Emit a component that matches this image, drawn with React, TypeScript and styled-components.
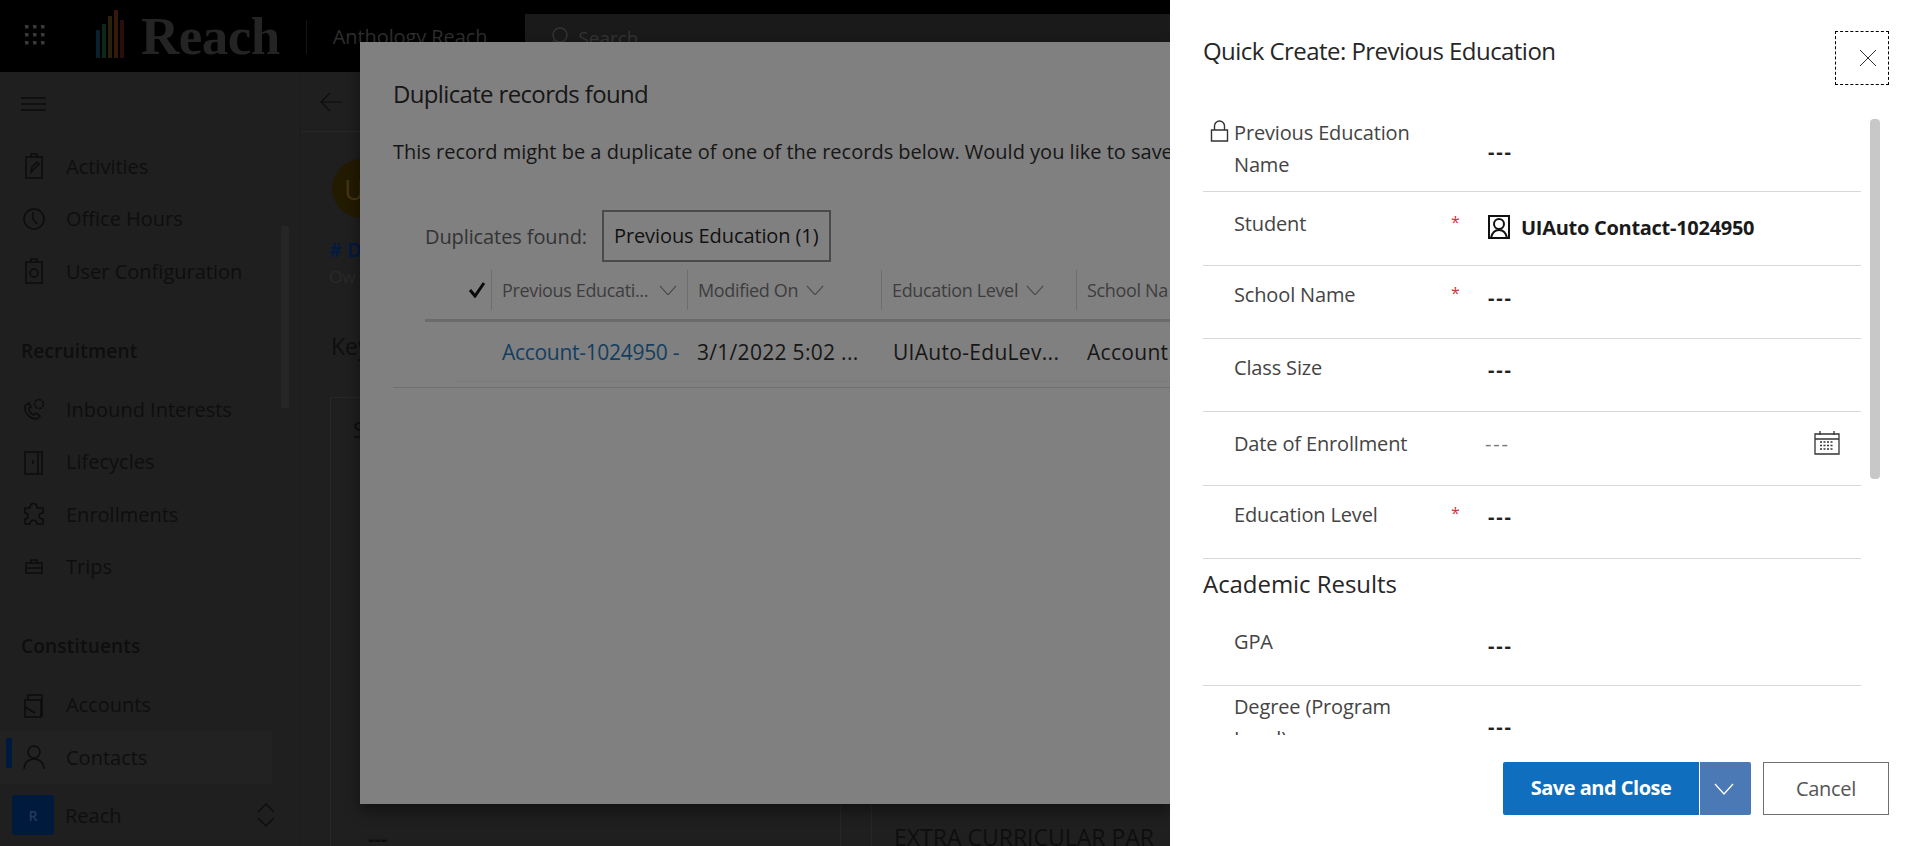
import React from 'react'
import styled, { createGlobalStyle } from 'styled-components'

const GlobalStyle = createGlobalStyle`
  html, body, #root {
    margin: 0;
    height: 100%;
  }
  body {
    font-family: 'Open Sans', 'Noto Sans', 'Liberation Sans', sans-serif;
    background: #1f1f1f;
    overflow: hidden;
  }
  * {
    box-sizing: border-box;
  }
`

const Page = styled.div`
  position: relative;
  width: 1920px;
  height: 846px;
  overflow: hidden;
  display: flex;
  flex-direction: column;
  color: #0e0e0e;
`

/* ---- top header ---- */
const Header = styled.header`
  display: flex;
  height: 72px;
  flex: none;
  background: #000;
  padding-left: 23px;
`
const Waffle = styled.svg`
  width: 24px;
  height: 24px;
  margin-top: 23px;
`
const LogoMark = styled.svg`
  width: 30px;
  height: 48px;
  margin: 10px 0 0 49px;
`
const LogoText = styled.div`
  margin: 0 0 0 15px;
  font-family: 'Liberation Serif', serif;
  font-size: 53px;
  line-height: 72px;
  font-weight: 700;
  letter-spacing: -0.5px;
  color: #242424;
`
const HeaderDivider = styled.div`
  width: 1px;
  height: 34px;
  margin: 20px 26px 0 26px;
  background: #151515;
`
const AppName = styled.div`
  font-size: 20px;
  line-height: 74px;
  color: #2e2e2e;
  letter-spacing: -0.1px;
`
const SearchBox = styled.div`
  display: flex;
  align-items: center;
  gap: 10px;
  width: 700px;
  height: 58px;
  margin: 14px 0 0 38px;
  padding: 0 0 10px 23px;
  background: #1a1a1a;
  font-size: 19px;
  color: #333;
`

/* ---- sidebar ---- */
const Body = styled.div`
  display: flex;
  flex: 1;
  min-height: 0;
`
const Sidebar = styled.nav`
  position: relative;
  display: flex;
  flex-direction: column;
  width: 301px;
  flex: none;
  border-right: 1px solid #1b1b1b;
`
const Burger = styled.div`
  display: flex;
  align-items: center;
  height: 64px;
  margin-bottom: 4px;
  padding-left: 21px;
`
const NavGroup = styled.div`
  display: flex;
  flex-direction: column;
  flex: none;
`
const GroupTitle = styled.div`
  height: 52.5px;
  margin: 27px 0 6px;
  padding-left: 21px;
  font-size: 19px;
  font-weight: 600;
  line-height: 52px;
  color: #0e0e0e;
  letter-spacing: 0.2px;
`
const NavItem = styled.div<{ $active?: boolean }>`
  position: relative;
  display: flex;
  align-items: center;
  gap: 20px;
  width: 272px;
  height: 52.5px;
  padding-left: 22px;
  font-size: 20px;
  color: #0e0e0e;
  background: ${p => (p.$active ? '#222' : 'transparent')};
`
const ActiveMark = styled.span`
  position: absolute;
  left: 6px;
  top: 7px;
  width: 6px;
  height: 30px;
  border-radius: 1px;
  background: #00193f;
`
const NavIcon = styled.svg`
  width: 24px;
  height: 28px;
  flex: none;
`
const NavScroll = styled.div`
  position: absolute;
  left: 281px;
  top: 154px;
  width: 8px;
  height: 182px;
  background: #262626;
  border-radius: 2px;
`
const Footer = styled.div`
  display: flex;
  align-items: center;
  height: 62px;
  margin-top: auto;
  padding: 0 24px 0 12px;
  font-size: 20px;
`
const Tile = styled.div`
  display: grid;
  place-items: center;
  width: 42px;
  height: 40px;
  margin-right: 11px;
  border-radius: 3px;
  background: #001a3d;
  font-size: 14px;
  font-weight: 600;
  color: #233a5a;
`
const FooterLabel = styled.span`
  flex: 1;
`

/* ---- page underneath ---- */
const Main = styled.main`
  flex: 1;
  min-width: 0;
`
const CommandBar = styled.div`
  display: flex;
  align-items: center;
  height: 60px;
  padding-left: 19px;
  border-bottom: 1px solid #272727;
`
const RecordHead = styled.div`
  padding: 27px 0 0 31px;
`
const Avatar = styled.div`
  display: flex;
  align-items: center;
  width: 59px;
  height: 59px;
  padding-left: 12px;
  border-radius: 50%;
  background: #231a02;
  font-size: 28px;
  color: #43350e;
`
const RecordName = styled.div`
  margin: 18px 0 0 -3px;
  font-size: 20px;
  line-height: 28px;
  font-weight: 600;
  color: #001a46;
`
const RecordOwner = styled.div`
  margin-left: -3px;
  font-size: 17px;
  line-height: 26px;
  color: #2a2a2a;
`
const TabName = styled.div`
  margin: 39px 0 0 30px;
  font-size: 23px;
  line-height: 34px;
`
const CardGrid = styled.div`
  display: grid;
  grid-template-columns: 511px 1fr;
  gap: 30px;
  height: 450px;
  margin: 34px 0 0 29px;
`
const Card = styled.div`
  display: flex;
  flex-direction: column;
  justify-content: space-between;
  padding: 14px 22px 0;
  border: 1px solid #272727;
  border-bottom: 0;
`
const CardTitle = styled.div`
  font-size: 22px;
  line-height: 34px;
`
const CardValue = styled.div`
  height: 20px;
  padding-left: 15px;
  font-size: 20px;
  font-weight: 700;
  line-height: 24px;
`
const SideCard = styled(Card)`
  justify-content: flex-end;
  padding: 0 22px;
`
const SideCardTitle = styled.div`
  height: 26px;
  font-size: 23px;
  line-height: 33px;
  white-space: nowrap;
`

/* ---- duplicate dialog ---- */
const Dialog = styled.section`
  position: absolute;
  left: 360px;
  top: 42px;
  width: 811px;
  height: 762px;
  padding: 34px 0 0 33px;
  overflow: hidden;
  background: #808080;
  box-shadow: 0 6px 14px rgba(0, 0, 0, 0.45);
  color: #161616;
`
const DialogTitle = styled.h2`
  margin: 0;
  font-size: 24px;
  line-height: 36px;
  font-weight: 400;
  letter-spacing: -0.65px;
`
const DialogMessage = styled.p`
  margin: 25px 0 0;
  font-size: 20px;
  line-height: 30px;
  white-space: nowrap;
`
const TabRow = styled.div`
  display: flex;
  align-items: center;
  gap: 15px;
  margin: 43px 0 0 32px;
`
const TabCaption = styled.span`
  font-size: 20px;
  color: #333;
  letter-spacing: -0.1px;
`
const TabButton = styled.div`
  width: 229px;
  height: 52px;
  padding-left: 10px;
  border: 2px solid #4a4a4a;
  font-size: 20px;
  line-height: 48px;
  color: #111;
  white-space: nowrap;
  letter-spacing: -0.1px;
`
const GridHead = styled.div`
  display: flex;
  width: 778px;
  height: 60px;
  margin-left: 32px;
  padding: 8px 0 0 34px;
  border-bottom: 3px solid #6b6b6b;
`
const CheckCell = styled.div`
  display: flex;
  align-items: center;
  width: 32px;
  flex: none;
  height: 40px;
  padding-left: 9px;
`
const HeadCell = styled.div<{ $w: number; $gap?: number }>`
  display: flex;
  align-items: center;
  gap: ${p => p.$gap ?? 8}px;
  width: ${p => p.$w}px;
  flex: none;
  height: 40px;
  padding-left: 10px;
  border-left: 1px solid #6d6d6d;
  font-size: 18px;
  color: #3d3d3d;
  white-space: nowrap;
  letter-spacing: -0.35px;
`
const GridRow = styled.div`
  width: 777px;
  height: 66px;
  padding-left: 63px;
  border-bottom: 1px solid #6f6f6f;
`
const RowInner = styled.div`
  display: flex;
  height: 60px;
  padding-left: 46px;
  border-bottom: 1px solid #7a7a7a;
`
const RowCell = styled.div<{ $w: number; $link?: boolean }>`
  width: ${p => p.$w}px;
  flex: none;
  padding-top: 12px;
  font-size: 21px;
  line-height: 36px;
  white-space: nowrap;
  letter-spacing: ${p => (p.$link ? -0.3 : 0.3)}px;
  color: ${p => (p.$link ? '#133e60' : '#161616')};
`

/* ---- quick create panel ---- */
const Panel = styled.aside`
  position: absolute;
  left: 1170px;
  top: 0;
  display: flex;
  flex-direction: column;
  width: 750px;
  height: 846px;
  background: #fff;
  color: #333;
`
const PanelHead = styled.div`
  display: flex;
  justify-content: space-between;
  height: 113px;
  flex: none;
  padding: 31px 31px 0 33px;
`
const PanelTitle = styled.h1`
  margin: 0;
  font-size: 24px;
  line-height: 40px;
  font-weight: 400;
  color: #262626;
  letter-spacing: -0.55px;
`
const CloseButton = styled.div`
  display: grid;
  place-items: center;
  width: 54px;
  height: 54px;
  padding: 0 0 0 12px;
  border: 1px dashed #000;
`
const Form = styled.div`
  position: relative;
  flex: 1;
  min-height: 0;
  padding: 0 59px 0 33px;
  overflow: hidden;
`
const FormScroll = styled.div`
  position: absolute;
  right: 40px;
  top: 6px;
  width: 10px;
  height: 360px;
  border-radius: 4px;
  background: #c8c8c8;
`
const Row = styled.div<{ $h: number; $top: number; $line?: boolean }>`
  display: grid;
  grid-template-columns: 31px 221px 33px 1fr 47px;
  height: ${p => p.$h}px;
  padding-top: ${p => p.$top}px;
  border-bottom: ${p => (p.$line === false ? '0' : '1px solid #d8d8d8')};
`
const LockCell = styled.div`
  margin: 3px 0 0 7px;
`
const Label = styled.div`
  padding-right: 20px;
  font-size: 20px;
  line-height: 32px;
  color: #444;
  letter-spacing: -0.15px;
`
const Star = styled.div`
  margin-left: -4px;
  font-size: 16px;
  line-height: 28px;
  color: #d13438;
`
const Value = styled.div<{ $top?: number; $muted?: boolean }>`
  margin-top: ${p => p.$top ?? 0}px;
  margin-left: ${p => (p.$muted ? -3 : 0)}px;
  font-size: 20px;
  line-height: 32px;
  font-weight: ${p => (p.$muted ? 400 : 700)};
  letter-spacing: 1.8px;
  color: ${p => (p.$muted ? '#777' : '#222')};
`
const LookupValue = styled.div`
  display: flex;
  align-items: center;
  gap: 11px;
  margin-top: 3px;
  height: 32px;
  font-size: 20px;
  font-weight: 700;
  color: #1a1a1a;
  letter-spacing: -0.28px;
  white-space: nowrap;
`
const IconCell = styled.div`
  margin-top: 3px;
`
const SectionTitle = styled.h3`
  height: 50px;
  margin: 0;
  font-size: 24px;
  line-height: 50px;
  font-weight: 400;
  color: #262626;
  letter-spacing: -0.05px;
`
const Actions = styled.div`
  display: flex;
  justify-content: flex-end;
  height: 111px;
  flex: none;
  padding: 27px 31px 0 0;
`
const SaveButton = styled.div`
  width: 197px;
  height: 53px;
  border-radius: 2px 0 0 2px;
  background: #106ebe;
  border-right: 1px solid #fff;
  font-size: 20px;
  font-weight: 700;
  line-height: 52px;
  text-align: center;
  color: #fff;
  letter-spacing: -0.5px;
`
const SplitButton = styled.div`
  display: grid;
  place-items: center;
  width: 51px;
  height: 53px;
  margin-right: 12px;
  padding-right: 4px;
  border-radius: 0 2px 2px 0;
  background: #4a79b5;
`
const CancelButton = styled.div`
  width: 126px;
  height: 53px;
  border: 1px solid #707070;
  font-size: 20px;
  line-height: 51px;
  text-align: center;
  color: #555;
  letter-spacing: -0.3px;
`

const stroke = { fill: 'none', stroke: '#0c0c0c', strokeWidth: 1.5 }

const navIcons: Record<string, React.ReactNode> = {
  activities: (
    <g {...stroke}>
      <path d="M4 5h16v21H4zM9 5V2h6v3" />
      <path d="M9 20l1-5 5-5 2 2-5 5z" />
    </g>
  ),
  hours: (
    <g {...stroke}>
      <circle cx="12" cy="14" r="10" />
      <path d="M11 7v7l4 5" />
    </g>
  ),
  config: (
    <g {...stroke}>
      <path d="M4 5h16v21H4zM9 5V2h6v3" />
      <circle cx="12" cy="16" r="4" />
    </g>
  ),
  inbound: (
    <g {...stroke}>
      <path d="M3 11c-1 6 4 13 12 13l3-3-4-3-2 2c-3-1-5-4-5-7l2-1-2-4z" />
      <circle cx="17" cy="9" r="4.5" strokeDasharray="3 1" />
    </g>
  ),
  lifecycles: (
    <g {...stroke}>
      <path d="M3 4h17v22H3z" />
      <path d="M16 4v22M11 12v4" />
    </g>
  ),
  enrollments: (
    <g {...stroke}>
      <path d="M8 8c0-6 7-6 7 0h6v5c-5 0-5 6 0 6v5h-6c0-5-7-5-7 0H3v-5c4 0 4-6 0-6V8z" />
    </g>
  ),
  trips: (
    <g {...stroke}>
      <path d="M4 10h16v10H4zM9 10V7h6v3M4 15h16" />
    </g>
  ),
  accounts: (
    <g {...stroke}>
      <path d="M3 9h16v17H3zM6 9V4h14v22M3 16l10 6" />
    </g>
  ),
  contacts: (
    <g {...stroke}>
      <circle cx="12" cy="9" r="6" />
      <path d="M2 26c0-6 4-10 10-10s10 4 10 10" />
    </g>
  ),
}

const NavGlyph = ({ name }: { name: string }) => (
  <NavIcon viewBox="0 0 24 28">{navIcons[name]}</NavIcon>
)

const Chevron = ({ color = '#4a4a4a', size = 18 }: { color?: string; size?: number }) => (
  <svg width={size} height={size * 0.6} viewBox="0 0 20 12" fill="none" stroke={color} strokeWidth="1.3">
    <path d="M1 1l9 10 9-10" />
  </svg>
)

const FormRows = () => (
  <>
    <Row $h={79} $top={4}>
      <LockCell>
        <svg width="19" height="22" viewBox="0 0 19 22" fill="none" stroke="#333" strokeWidth="1.4">
          <path d="M1.5 10h16v11h-16zM4.5 10V6a5 5 0 0 1 10 0v4" />
        </svg>
      </LockCell>
      <Label>Previous Education Name</Label>
      <span />
      <Value $top={19}>---</Value>
    </Row>
    <Row $h={73.5} $top={16}>
      <span />
      <Label>Student</Label>
      <Star>*</Star>
      <LookupValue>
        <svg width="22" height="24" viewBox="0 0 22 24" fill="none" stroke="#111" strokeWidth="2">
          <path d="M1 1h20v22H1z" />
          <circle cx="11" cy="9" r="5" />
          <path d="M3 23c1-5 4-8 8-8s7 3 8 8" />
        </svg>
        UIAuto Contact-1024950
      </LookupValue>
    </Row>
    <Row $h={73.5} $top={13}>
      <span />
      <Label>School Name</Label>
      <Star>*</Star>
      <Value $top={3}>---</Value>
    </Row>
    <Row $h={73} $top={13}>
      <span />
      <Label>Class Size</Label>
      <span />
      <Value $top={2}>---</Value>
    </Row>
    <Row $h={74} $top={16}>
      <span />
      <Label>Date of Enrollment</Label>
      <span />
      <Value $muted>---</Value>
      <IconCell>
        <svg width="26" height="24" viewBox="0 0 26 24" fill="none" stroke="#333" strokeWidth="1.3">
          <path d="M1 3h24v20H1zM1 8h24M6 0v4M20 0v4" />
          <path d="M6 11h14M6 14.5h14M6 18h14" strokeDasharray="2 1.5" />
        </svg>
      </IconCell>
    </Row>
    <Row $h={73} $top={13}>
      <span />
      <Label>Education Level</Label>
      <Star>*</Star>
      <Value $top={2}>---</Value>
    </Row>
    <SectionTitle>Academic Results</SectionTitle>
    <Row $h={77} $top={17}>
      <span />
      <Label>GPA</Label>
      <span />
      <Value $top={4}>---</Value>
    </Row>
    <Row $h={80} $top={5} $line={false}>
      <span />
      <Label>Degree (Program Level)</Label>
      <span />
      <Value $top={20}>---</Value>
    </Row>
  </>
)

export default function App() {
  return (
    <Page>
      <GlobalStyle />
      <Header>
        <Waffle viewBox="0 0 24 24" fill="#3a3a3a">
          {[2, 10, 18].flatMap(y =>
            [2, 10, 18].map(x => <rect key={`${x}-${y}`} x={x} y={y} width="3.5" height="3.5" />),
          )}
        </Waffle>
        <LogoMark viewBox="0 0 30 48">
          <rect x="0" y="20" width="4" height="28" fill="#0a202c" />
          <rect x="6" y="14" width="4" height="34" fill="#0f2816" />
          <rect x="12" y="6" width="4" height="42" fill="#2a210a" />
          <rect x="18" y="0" width="4" height="48" fill="#341a0a" />
          <rect x="24" y="10" width="4" height="38" fill="#2a0e0c" />
        </LogoMark>
        <LogoText>Reach</LogoText>
        <HeaderDivider />
        <AppName>Anthology Reach</AppName>
        <SearchBox>
          <svg width="20" height="24" viewBox="0 0 20 24" fill="none" stroke="#333" strokeWidth="1.5">
            <circle cx="12" cy="9" r="7" />
            <path d="M7 14l-6 7" />
          </svg>
          Search
        </SearchBox>
      </Header>
      <Body>
        <Sidebar>
          <Burger>
            <svg width="25" height="14" viewBox="0 0 25 14" stroke="#0c0c0c" strokeWidth="1.4">
              <path d="M0 1h25M0 7h25M0 13h25" />
            </svg>
          </Burger>
          <NavGroup>
            <NavItem><NavGlyph name="activities" />Activities</NavItem>
            <NavItem><NavGlyph name="hours" />Office Hours</NavItem>
            <NavItem><NavGlyph name="config" />User Configuration</NavItem>
          </NavGroup>
          <NavGroup>
            <GroupTitle>Recruitment</GroupTitle>
            <NavItem><NavGlyph name="inbound" />Inbound Interests</NavItem>
            <NavItem><NavGlyph name="lifecycles" />Lifecycles</NavItem>
            <NavItem><NavGlyph name="enrollments" />Enrollments</NavItem>
            <NavItem><NavGlyph name="trips" />Trips</NavItem>
          </NavGroup>
          <NavGroup>
            <GroupTitle>Constituents</GroupTitle>
            <NavItem><NavGlyph name="accounts" />Accounts</NavItem>
            <NavItem $active><ActiveMark /><NavGlyph name="contacts" />Contacts</NavItem>
          </NavGroup>
          <NavScroll />
          <Footer>
            <Tile>R</Tile>
            <FooterLabel>Reach</FooterLabel>
            <svg width="20" height="26" viewBox="0 0 20 26" fill="none" stroke="#0c0c0c" strokeWidth="1.3">
              <path d="M2 10l8-8 8 8M2 16l8 8 8-8" />
            </svg>
          </Footer>
        </Sidebar>
        <Main>
          <CommandBar>
            <svg width="22" height="20" viewBox="0 0 22 20" fill="none" stroke="#0c0c0c" strokeWidth="1.1">
              <path d="M22 10H1M10 1l-9 9 9 9" />
            </svg>
          </CommandBar>
          <RecordHead>
            <Avatar>U</Avatar>
            <RecordName># D</RecordName>
            <RecordOwner>Ow</RecordOwner>
          </RecordHead>
          <TabName>Key</TabName>
          <CardGrid>
            <Card>
              <CardTitle>S</CardTitle>
              <CardValue>---</CardValue>
            </Card>
            <SideCard>
              <SideCardTitle>EXTRA CURRICULAR PAR</SideCardTitle>
            </SideCard>
          </CardGrid>
        </Main>
      </Body>

      <Dialog>
        <DialogTitle>Duplicate records found</DialogTitle>
        <DialogMessage>This record might be a duplicate of one of the records below. Would you like to save</DialogMessage>
        <TabRow>
          <TabCaption>Duplicates found:</TabCaption>
          <TabButton>Previous Education (1)</TabButton>
        </TabRow>
        <GridHead>
          <CheckCell>
            <svg width="18" height="16" viewBox="0 0 18 16" fill="none" stroke="#0a0a0a" strokeWidth="3">
              <path d="M2 8l5 6L16 1" />
            </svg>
          </CheckCell>
          <HeadCell $w={196} $gap={11}>Previous Educati...<Chevron /></HeadCell>
          <HeadCell $w={194}>Modified On<Chevron /></HeadCell>
          <HeadCell $w={195}>Education Level<Chevron /></HeadCell>
          <HeadCell $w={195}>School Na</HeadCell>
        </GridHead>
        <GridRow>
          <RowInner>
            <RowCell $w={195} $link>Account-1024950 -</RowCell>
            <RowCell $w={196}>3/1/2022 5:02 ...</RowCell>
            <RowCell $w={194}>UIAuto-EduLev...</RowCell>
            <RowCell $w={100}>Account</RowCell>
          </RowInner>
        </GridRow>
      </Dialog>

      <Panel>
        <PanelHead>
          <PanelTitle>Quick Create: Previous Education</PanelTitle>
          <CloseButton>
            <svg width="18" height="18" viewBox="0 0 18 18" stroke="#333" strokeWidth="1">
              <path d="M1 1l16 16M17 1L1 17" />
            </svg>
          </CloseButton>
        </PanelHead>
        <Form>
          <FormRows />
          <FormScroll />
        </Form>
        <Actions>
          <SaveButton>Save and Close</SaveButton>
          <SplitButton><Chevron color="#fff" size={20} /></SplitButton>
          <CancelButton>Cancel</CancelButton>
        </Actions>
      </Panel>
    </Page>
  )
}
